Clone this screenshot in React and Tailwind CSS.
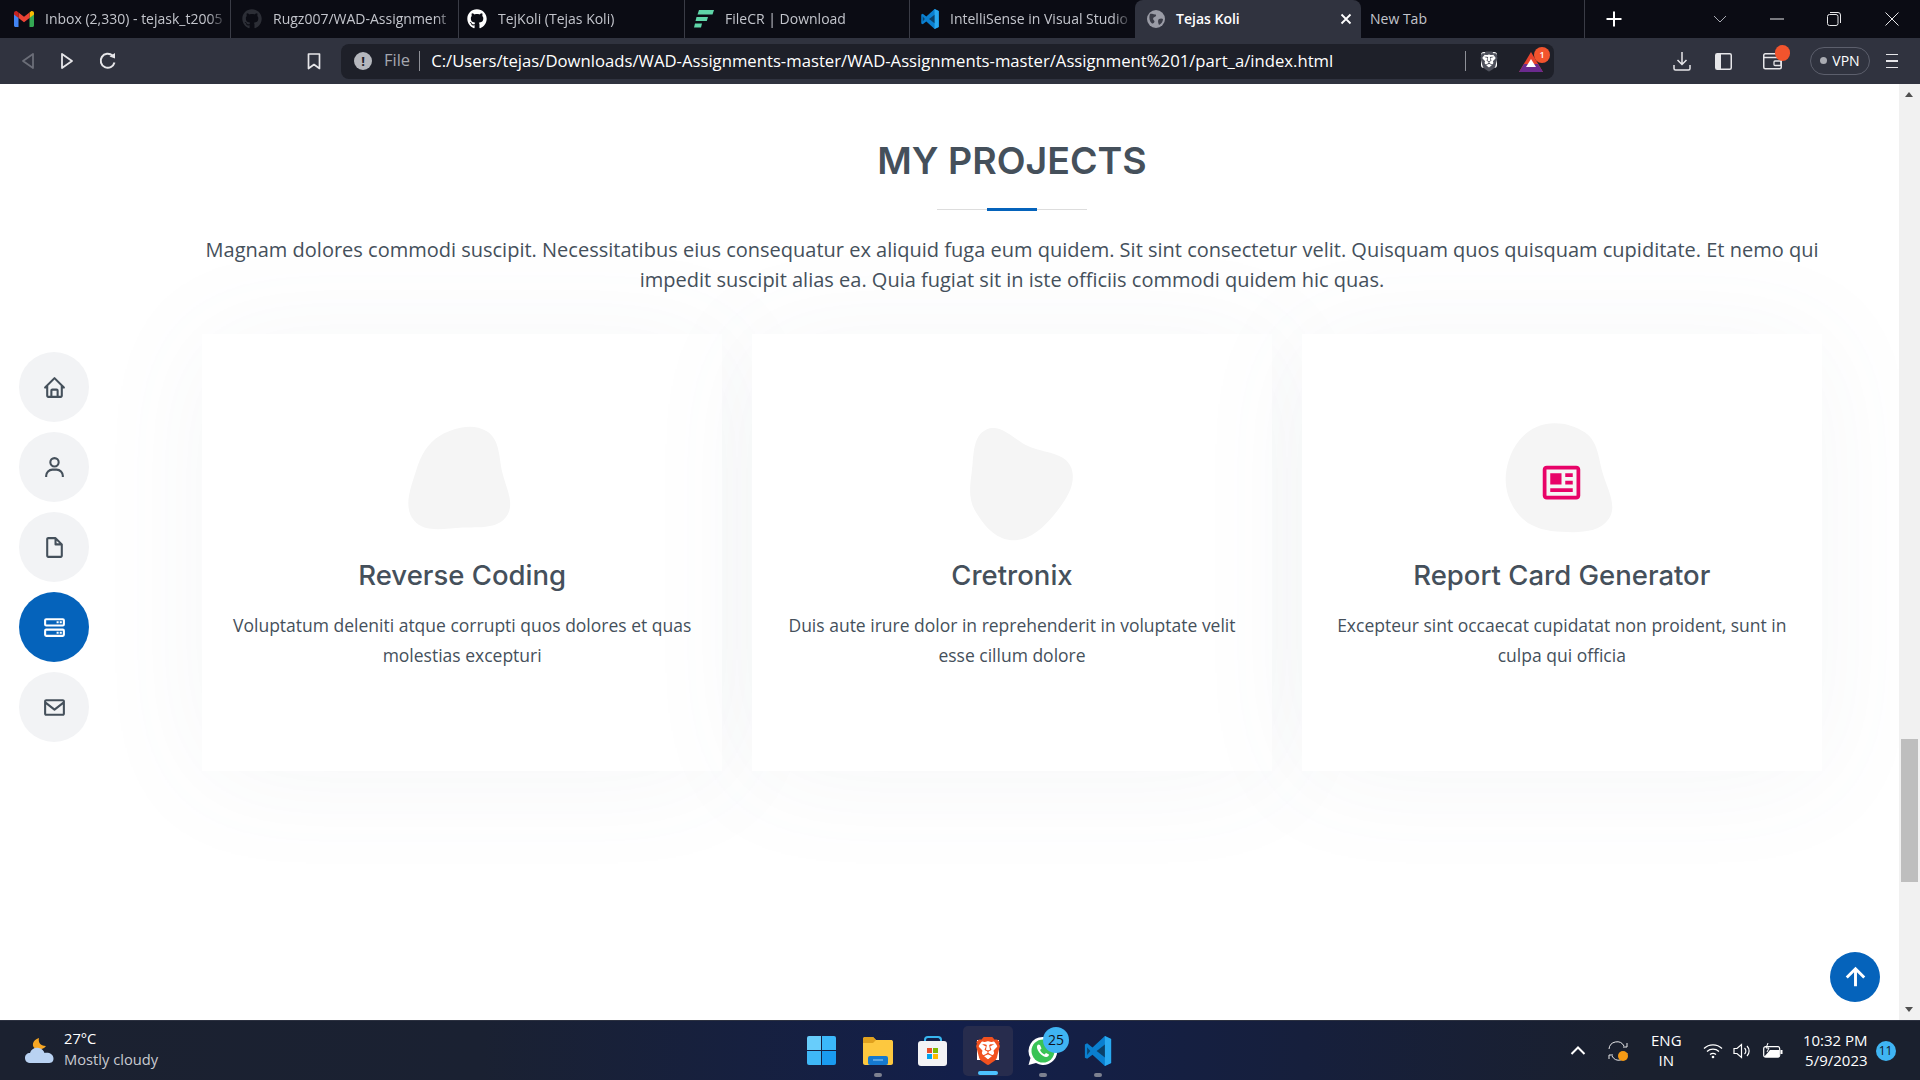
import React from "react";
import { BiHome, BiUser, BiFileBlank, BiServer, BiEnvelope, BiNews, BiUpArrowAlt } from "react-icons/bi";
import { FaGithub } from "react-icons/fa";
import { SiBrave } from "react-icons/si";

const Gmail = () => (
  <svg width="20" height="16" viewBox="0 0 20 16" className="shrink-0">
    <path d="M0 2v12.5C0 15.3.7 16 1.5 16H4.500V6z" fill="#4285f4" />
    <path d="M20 2v12.5c0 .8-.7 1.500-1.500 1.500H15.500V6z" fill="#34a853" />
    <path d="M15.500 1.500V7L20 3.500V2C20 .3 18 -.5 16.800.4z" fill="#fbbc04" />
    <path d="M4.500 7V1.500L10 5.800l5.500-4.300V7L10 11.300z" fill="#ea4335" />
    <path d="M0 2v1.500L4.500 7V1.500L3.200.4C2 -.5 0 .3 0 2z" fill="#c5221f" />
  </svg>
);
const FileCR = () => (
  <svg width="20" height="20" viewBox="0 0 20 20" className="shrink-0">
    <path d="M5 1h15l-1.500 4.500H3.500zM2.500 8H14l-1.200 4H1.500zM1 14.500h7l-1 4H0z" fill="#5fd6a8" />
  </svg>
);
const VSCode = ({ s = 20 }) => (
  <svg width={s} height={s} viewBox="0 0 24 24" className="shrink-0">
    <path d="M17.500 0 7.600 9.100 3.300 5.800l-1.800.9v10.600l1.800.9 4.300-3.300 9.900 9.100 5-2.400V2.400z" fill="#0a7fcf" />
    <path d="M17.500 0l5 2.400v19.200l-5 2.400z" fill="#29a9f0" />
    <path d="M17.500 6.800 10.900 12l6.600 5.200z" fill="#0b0c14" fillOpacity="0.55" />
    <path d="M3.300 8.900 5.800 12l-2.500 3.100z" fill="#0b0c14" fillOpacity="0.5" />
  </svg>
);
const Globe = () => (
  <svg width="18" height="18" viewBox="0 0 18 18" className="shrink-0">
    <circle cx="9" cy="9" r="9" fill="#9a9ca6" />
    <path d="M3 4c2-.5 3 .5 5 .5s1 2-.5 2.500-2 2-.5 3.500-1 3.500-2 3C3 12 1.500 8 3 4zM12 9c2-1 3-.5 4 0 0 3-2 5-4 6-1-2-1.500-5 0-6z" fill="#3b3d48" />
  </svg>
);

const Tab = ({ w, pl, icon, text, sep = true }) => (
  <div className={`flex h-[38px] shrink-0 items-center ${sep ? "border-r border-[#3a3c46]" : ""}`} style={{ width: w, paddingLeft: pl }}>
    <span className="flex w-[20px] shrink-0 justify-center">{icon}</span>
    <span className="mb-[2px] ml-[11px] flex-1 overflow-hidden whitespace-nowrap pr-[5px] text-[14px] text-[#c3c5cc] [mask-image:linear-gradient(to_right,black_88%,transparent_99%)]">{text}</span>
  </div>
);

const NavBtn = ({ active, children }) => (
  <div className={`flex h-[70px] w-[70px] items-center justify-center rounded-full ${active ? "bg-[#0563bb] text-white" : "bg-[#f2f3f5] text-[#45505b]"}`}>
    {children}
  </div>
);

const blobs = [
  "M300,521.0016835830174C376.1290562159157,517.8887921683347,466.0731472004068,529.7835943286574,510.70327084640275,468.03025145048787C554.3714126377745,407.6079735673963,508.03601936045806,328.9844924480964,491.2728898941984,256.3432110539036C474.5976632858925,184.082847569629,479.9380746630129,96.60480741107993,416.23090153303,58.64404602377083C348.86323505073057,18.502131276798302,261.93793281208167,40.57373210992963,193.5410806939664,78.93577620505333C130.42746243093433,114.334589627462,98.30271207620316,179.96522072025542,76.75703585869454,249.04625023123273C51.97151888228291,328.5150500222984,13.704378332031375,421.85034740162234,66.52175969318436,486.19268352777647C119.04800174914682,550.1803526380478,217.28368757567262,524.383925680826,300,521.0016835830174",
  "M300,582.0697525312426C382.5290701553225,586.8405444964366,449.9789794690241,525.3245884688669,502.5850820975895,461.55621195738473C556.606425686781,396.0723002908107,615.8543463187945,314.28637112970534,586.6730223649479,234.56875336149918C558.9533121215079,158.8439757836574,454.9685369536778,164.00468322053177,381.49747125262974,130.76875717737553C312.15926192815925,99.40240125094834,248.97055460311594,18.661163978235184,179.8680185752513,50.54337015887873C110.5421016452524,82.52863877960104,119.82277516462835,180.83849132639028,109.12597500060166,256.43424936330496C100.08760227029461,320.3096726198365,92.17705696193138,384.0621239912766,124.79988738764834,439.7174275375508C164.83382741302287,508.01625554203684,220.96474134820875,577.5009287672846,300,582.0697525312426",
  "M300,541.5067337569781C382.14930387511276,545.0595476570109,479.8736841581634,548.3450877840088,526.4010558755058,480.5488172755941C571.5218469581645,414.80211281144784,517.5187510058486,332.0715597781072,496.52539010469104,255.14436215662573C477.37192572678356,184.95920475031193,473.57363656557914,105.61284051026155,413.0603344069578,65.22779650032875C343.27470386102294,18.654635553484475,251.2091493199835,5.337323636656869,175.0934190732945,40.62881213300186C97.87086631185822,76.43348514350839,51.98124368387456,156.15599469081315,36.44837278890362,239.84606092416172C21.716077023791087,319.22268207091537,43.775223500013084,401.1760424656574,96.891909868211,461.97329694683043C147.22146801428983,519.5804099606455,223.5754009179313,538.201503339737,300,541.5067337569781",
];

const Card = ({ blob, title, text, icon }) => (
  <div className="flex h-[437px] flex-col items-center bg-white px-[25px] pt-[85px] text-center shadow-[0_6px_112px_rgba(110,123,131,0.06)]">
    <div className="relative h-[125px] w-[125px]">
      <svg width="125" height="125" viewBox="0 0 600 600"><path d={blob} fill="#f5f5f5" /></svg>
      {icon && <span className="absolute inset-0 flex items-center justify-center pt-[1px]">{icon}</span>}
    </div>
    <h4 className="mt-[13px] h-[36px] font-['Inter',sans-serif] text-[27.500px] font-medium leading-[36px] text-[#45505b]">{title}</h4>
    <p className="mt-[17px] font-['Open_Sans',sans-serif] text-[17.500px] leading-[30px] text-[#45505b]">{text}</p>
  </div>
);

export default function App() {
  return (
    <div className="flex h-[1080px] w-[1920px] flex-col overflow-hidden bg-white font-['Open_Sans',sans-serif]">
      {/* Tab strip */}
      <div className="flex h-[38px] shrink-0 items-center bg-[#0b0c14]">
        <Tab w={231} pl={14} icon={<Gmail />} text="Inbox (2,330) - tejask_t2005" />
        <Tab w={228} pl={11} icon={<FaGithub size={20} color="#2c2e36" />} text="Rugz007/WAD-Assignment" />
        <Tab w={226} pl={8} icon={<FaGithub size={20} color="#ffffff" />} text="TejKoli (Tejas Koli)" />
        <Tab w={225} pl={9} icon={<FileCR />} text="FileCR | Download" />
        <div className="flex h-[38px] w-[225px] shrink-0 items-center pl-[10px]">
          <VSCode />
          <span className="mb-[2px] ml-[10px] flex-1 overflow-hidden whitespace-nowrap text-[14px] text-[#c3c5cc] [mask-image:linear-gradient(to_right,black_88%,transparent_99%)]">IntelliSense in Visual Studio</span>
        </div>
        <div className="flex h-[38px] w-[226px] shrink-0 items-center rounded-t-[8px] bg-[#30333f] pl-[12px] pr-[9px]">
          <Globe />
          <span className="mb-[2px] ml-[11px] flex-1 text-[14px] font-semibold text-white">Tejas Koli</span>
          <svg width="12" height="12" viewBox="0 0 12 12"><path d="M1.500 1.500l9 9M10.500 1.500l-9 9" stroke="#fff" strokeWidth="1.800" /></svg>
        </div>
        <div className="flex h-[38px] w-[224px] shrink-0 items-center border-r border-[#3a3c46] pb-[2px] pl-[9px] text-[14px] text-[#c3c5cc]">New Tab</div>
        <svg className="ml-[21px]" width="16" height="16" viewBox="0 0 16 16"><path d="M8 .5v15M.5 8h15" stroke="#fff" strokeWidth="2" /></svg>
        <svg className="ml-[91px]" width="14" height="8" viewBox="0 0 14 8"><path d="M1 1l6 6 6-6" fill="none" stroke="#a8aab2" strokeWidth="1" /></svg>
        <svg className="ml-[43px]" width="14" height="14" viewBox="0 0 14 14"><path d="M0 7h14" stroke="#e8e8ea" strokeWidth="1" /></svg>
        <svg className="ml-[43px]" width="14" height="14" viewBox="0 0 14 14"><rect x=".5" y="2.500" width="10.500" height="11" rx="2" fill="none" stroke="#e8e8ea" /><path d="M3 .5h8a2.500 2.500 0 0 1 2.500 2.500v8" fill="none" stroke="#e8e8ea" /></svg>
        <svg className="ml-[44px]" width="14" height="14" viewBox="0 0 14 14"><path d="M.5.5l13 13M13.500.5l-13 13" stroke="#e8e8ea" strokeWidth="1" /></svg>
      </div>

      {/* Toolbar */}
      <div className="flex h-[46px] shrink-0 items-center bg-[#30333f]">
        <div className="flex w-[341px] shrink-0 items-center">
          <svg className="ml-[21px]" width="14" height="18" viewBox="0 0 14 18"><path d="M12 2 2 9l10 7z" fill="none" stroke="#6b6e78" strokeWidth="1.800" strokeLinejoin="round" /></svg>
          <svg className="ml-[25px]" width="14" height="18" viewBox="0 0 14 18"><path d="M2 2l10 7-10 7z" fill="none" stroke="#e6e6e9" strokeWidth="1.800" strokeLinejoin="round" /></svg>
          <svg className="ml-[25px]" width="18" height="18" viewBox="0 0 18 18"><path d="M15.500 10.500A7 7 0 1 1 13.500 3.600" fill="none" stroke="#e6e6e9" strokeWidth="2" /><path d="M10.500 4.500l5.500 2V1z" fill="#e6e6e9" /></svg>
          <svg className="ml-[190px]" width="14" height="17" viewBox="0 0 14 17"><path d="M1.500 1h11v14.500L7 11.500l-5.500 4z" fill="none" stroke="#e6e6e9" strokeWidth="1.700" strokeLinejoin="round" /></svg>
        </div>
        <div className="flex h-[35px] w-[1213px] shrink-0 items-center rounded-[8px] bg-[#1e2029]">
          <span className="ml-[13px] flex h-[18px] w-[18px] items-center justify-center rounded-full bg-[#b5b7bd] text-[13px] font-bold leading-none text-[#1e2029]">!</span>
          <span className="mb-[1px] ml-[12px] text-[16.500px] text-[#a5a7af]">File</span>
          <span className="ml-[9px] h-[20px] w-px bg-[#8e9097]" />
          <span className="mb-[1px] ml-[11px] w-[1034px] whitespace-nowrap text-[16.700px] text-white">C:/Users/tejas/Downloads/WAD-Assignments-master/WAD-Assignments-master/Assignment%201/part_a/index.html</span>
          <span className="h-[20px] w-px bg-[#8e9097]" />
          <span className="relative ml-[13px] flex h-[22px] w-[20px] items-center justify-center">
            <span className="absolute left-[2px] top-[2px] h-[16px] w-[16px] rounded-[3px] bg-white" />
            <SiBrave size={21} color="#4e505b" className="relative" />
          </span>
          <span className="relative ml-[20px] flex h-[22px] w-[24px]">
            <svg width="24" height="20" viewBox="0 0 24 20" className="mt-[2px]">
              <path d="M12 0l12 20H0z" fill="#e8432d" />
              <path d="M0 20l5-8 14 0 5 8z" fill="#6b2a8e" />
              <path d="M12 7l5 8H7z" fill="#fff" />
            </svg>
            <span className="absolute -right-[7px] -top-[3px] flex h-[16px] w-[16px] items-center justify-center rounded-full bg-[#f2542d] text-[9px] font-semibold text-white">1</span>
          </span>
        </div>
        <svg className="ml-[119px]" width="18" height="20" viewBox="0 0 18 20"><path d="M9 1v12M4.500 9 9 13.500 13.500 9M1 14v3.500C1 18.500 1.500 19 2.500 19h13c1 0 1.500-.5 1.500-1.500V14" fill="none" stroke="#e6e6e9" strokeWidth="1.500" /></svg>
        <svg className="ml-[24px]" width="17" height="17" viewBox="0 0 17 17"><rect x=".75" y=".75" width="15.500" height="15.500" rx="1.500" fill="none" stroke="#e6e6e9" strokeWidth="1.500" /><rect x="1" y="1" width="5" height="15" fill="#e6e6e9" /></svg>
        <span className="relative ml-[31px] flex h-[18px] w-[19px]">
          <svg width="19" height="18" viewBox="0 0 19 18"><rect x=".75" y="1.750" width="17.500" height="15" rx="1.500" fill="none" stroke="#e6e6e9" strokeWidth="1.500" /><path d="M1 5.500h17" stroke="#e6e6e9" strokeWidth="1.500" /><rect x="11" y="9" width="7" height="4.500" rx="1" fill="none" stroke="#e6e6e9" strokeWidth="1.300" /></svg>
          <span className="absolute -right-[8px] -top-[7px] h-[16px] w-[15px] rounded-full bg-[#f2542d]" />
        </span>
        <span className="ml-[28px] flex h-[28px] w-[60px] items-center justify-center rounded-full border border-[#5c5f6c] pb-[2px] text-[14px] text-white">
          <span className="mr-[5px] h-[7px] w-[7px] rounded-full bg-[#a9abb2]" />VPN
        </span>
        <span className="ml-[16px] flex w-[12px] flex-col gap-[5px]">
          <span className="h-[1.500px] bg-[#e6e6e9]" />
          <span className="h-[1.500px] bg-[#e6e6e9]" />
          <span className="h-[1.500px] bg-[#e6e6e9]" />
        </span>
      </div>

      {/* Page */}
      <div className="relative flex min-h-0 flex-1">
        <div className="min-w-0 flex-1 overflow-hidden pl-[202px] pr-[77px] pt-[52px]">
          <h2 className="text-center font-['Inter',sans-serif] text-[37.500px] font-semibold leading-[50px] text-[#45505b]">MY PROJECTS</h2>
          <div className="relative mx-auto mt-[23px] h-px w-[150px] bg-[#dddddd]">
            <span className="absolute -top-px left-[50px] h-[3px] w-[50px] bg-[#0563bb]" />
          </div>
          <p className="mt-[25px] text-center text-[20px] leading-[30px] text-[#45505b]">
            Magnam dolores commodi suscipit. Necessitatibus eius consequatur ex aliquid fuga eum quidem. Sit sint consectetur velit. Quisquam quos quisquam cupiditate. Et nemo qui impedit suscipit alias ea. Quia fugiat sit in iste officiis commodi quidem hic quas.
          </p>
          <div className="mt-[39px] grid grid-cols-3 gap-[29.500px]">
            <Card blob={blobs[0]} title="Reverse Coding" text="Voluptatum deleniti atque corrupti quos dolores et quas molestias excepturi" />
            <Card blob={blobs[1]} title="Cretronix" text="Duis aute irure dolor in reprehenderit in voluptate velit esse cillum dolore" />
            <Card blob={blobs[2]} title="Report Card Generator" text="Excepteur sint occaecat cupidatat non proident, sunt in culpa qui officia" icon={<BiNews size={45} color="#e80368" />} />
          </div>
        </div>

        {/* Scrollbar */}
        <div className="relative w-[21px] shrink-0 bg-[#f1f1f1]">
          <span className="absolute left-[6px] top-[8px] h-0 w-0 border-x-[4.500px] border-b-[5px] border-x-transparent border-b-[#505050]" />
          <span className="absolute left-[2px] top-[655px] h-[143px] w-[17px] bg-[#bebebe]" />
          <span className="absolute bottom-[8px] left-[6px] h-0 w-0 border-x-[4.500px] border-t-[5px] border-x-transparent border-t-[#505050]" />
        </div>

        {/* Floating side menu */}
        <div className="absolute left-[19px] top-[268px] flex flex-col gap-[10px]">
          <NavBtn><BiHome size={25} /></NavBtn>
          <NavBtn><BiUser size={25} /></NavBtn>
          <NavBtn><BiFileBlank size={25} /></NavBtn>
          <NavBtn active><BiServer size={25} /></NavBtn>
          <NavBtn><BiEnvelope size={25} /></NavBtn>
        </div>

        {/* Back to top */}
        <div className="absolute left-[1830px] top-[868px] flex h-[50px] w-[50px] items-center justify-center rounded-full bg-[#0563bb] text-white">
          <BiUpArrowAlt size={35} />
        </div>
      </div>

      {/* Taskbar */}
      <div className="flex h-[60px] shrink-0 items-center border-t border-[#2c3140] bg-[linear-gradient(90deg,#1b2130_0%,#1a2132_25%,#131f4a_50%,#161f3c_68%,#1a202e_85%,#1a202e_100%)]">
        <div className="flex w-[807px] shrink-0 items-center">
          <svg className="ml-[24px]" width="32" height="30" viewBox="0 0 32 30">
            <path d="M11 3c-1 4 1 8 7 8-2 3-6 4-10 3C3 12 4 5 11 3z" transform="translate(4 -1)" fill="#f6a623" />
            <path d="M7 27c-4 0-6-2-6-5s2-5 5-5c1-4 5-6 9-5 3 .5 5 3 5.500 5 4-1 9 1 9 5.500S26 27 23 27z" fill="#b9d2f2" />
          </svg>
          <div className="mb-[4px] ml-[8px] flex flex-col text-[14.700px] leading-[21px]">
            <span className="text-white">27°C</span>
            <span className="text-[#c8cad0]">Mostly cloudy</span>
          </div>
        </div>
        <div className="flex items-center">
          <span className="grid h-[29px] w-[29px] grid-cols-2 gap-[1.500px]">
            <span className="rounded-tl-[2px] bg-[#68cdfb]" />
            <span className="rounded-tr-[2px] bg-[#3bb8fa]" />
            <span className="rounded-bl-[2px] bg-[#3fb7f6]" />
            <span className="rounded-br-[2px] bg-[#1a9bf0]" />
          </span>
          <span className="relative ml-[27px] flex h-[50px] w-[30px] items-center">
            <svg width="30" height="28" viewBox="0 0 30 28"><path d="M0 2c0-1 .5-2 2-2h8l3 3h15c1 0 2 .5 2 2v21c0 1-1 2-2 2H2c-1 0-2-1-2-2z" fill="#fdc83f" /><path d="M0 2c0-1 .5-2 2-2h8l3 3-3 3H0z" fill="#e0a11e" /><rect x="5" y="19" width="20" height="9" rx="2" fill="#1579cf" /><path d="M10 23h10" stroke="#9fd2f7" strokeWidth="1" /></svg>
            <span className="absolute -bottom-[1px] left-[11px] h-[4px] w-[8px] rounded-full bg-[#7d8190]" />
          </span>
          <span className="ml-[25px] flex h-[30px] w-[29px] flex-col items-center rounded-b-[3px]">
            <span className="h-[5px] w-[18px] rounded-t-[4px] border-x-2 border-t-2 border-[#38b6f0]" />
            <span className="grid h-[25px] w-[29px] place-content-center rounded-[3px] bg-[#f3f3f5]">
              <span className="grid grid-cols-2 gap-px">
                <span className="h-[5px] w-[5px] bg-[#e8502a]" />
                <span className="h-[5px] w-[5px] bg-[#7fb900]" />
                <span className="h-[5px] w-[5px] bg-[#00a4ef]" />
                <span className="h-[5px] w-[5px] bg-[#ffb900]" />
              </span>
            </span>
          </span>
          <span className="relative ml-[16px] flex h-[50px] w-[50px] items-center justify-center rounded-[5px] bg-[#272c4d]">
            <span className="absolute left-[14px] top-[14px] h-[20px] w-[22px] bg-white" />
            <SiBrave size={28} color="#f1511f" className="relative" />
            <span className="absolute bottom-[1px] left-[15px] h-[4px] w-[20px] rounded-full bg-[#4cc2ff]" />
          </span>
          <span className="relative ml-[15px] flex h-[50px] w-[30px] items-center">
            <svg width="30" height="30" viewBox="0 0 30 30">
              <path d="M15 1a14 14 0 1 1-7 26l-7.500 2 2-7A14 14 0 0 1 15 1z" fill="#fff" />
              <circle cx="15" cy="15" r="11.500" fill="#39c355" />
              <path d="M10 8.500c-1.500 1.500-1.500 3 0 6s5 6 8 6.500c1.500.2 3-1 3-2.500l-3-1.500-1.500 1.500c-1.500-.5-4-3-4.500-4.500l1.500-1.500-1.500-3.500z" fill="#fff" />
            </svg>
            <span className="absolute -right-[11px] top-[1px] flex h-[26px] w-[26px] items-center justify-center rounded-full bg-[#3fb4f3] text-[14px] text-[#10131c]">25</span>
            <span className="absolute -bottom-[1px] left-[11px] h-[4px] w-[8px] rounded-full bg-[#7d8190]" />
          </span>
          <span className="relative ml-[25px] flex h-[50px] w-[30px] items-center">
            <VSCode s={30} />
            <span className="absolute -bottom-[1px] left-[11px] h-[4px] w-[8px] rounded-full bg-[#7d8190]" />
          </span>
        </div>
        <div className="ml-[457px] flex items-center text-white">
          <svg width="16" height="9" viewBox="0 0 16 9"><path d="M1.500 8 8 1.500 14.500 8" fill="none" stroke="#fff" strokeWidth="2" /></svg>
          <span className="relative ml-[22px] h-[20px] w-[20px]">
            <svg width="20" height="20" viewBox="0 0 20 20"><path d="M1 8a8 8 0 0 1 15-3M19 2v4h-4M19 12a8 8 0 0 1-15 3M1 18v-4h4" fill="none" stroke="#e8e8ea" strokeWidth="1" /></svg>
            <span className="absolute bottom-0 right-0 h-[10px] w-[10px] rounded-full bg-[#f59a14]" />
          </span>
          <span className="mb-[1px] ml-[23px] flex flex-col items-center text-[15px] leading-[20px]"><span>ENG</span><span>IN</span></span>
          <svg className="ml-[21px]" width="20" height="16" viewBox="0 0 20 16"><path d="M1 5.500a13 13 0 0 1 18 0M4 8.500a9 9 0 0 1 12 0M7 11.500a5 5 0 0 1 6 0" fill="none" stroke="#fff" strokeWidth="1.300" /><circle cx="10" cy="14" r="1.300" fill="#fff" /></svg>
          <svg className="ml-[10px]" width="19" height="16" viewBox="0 0 19 16"><path d="M1 5.500h3L8.500 1.500v13L4 10.500H1z" fill="none" stroke="#fff" strokeWidth="1.200" /><path d="M11.500 5a4 4 0 0 1 0 6M14 3a7 7 0 0 1 0 10" fill="none" stroke="#fff" strokeWidth="1.200" /></svg>
          <svg className="ml-[11px]" width="20" height="16" viewBox="0 0 20 16"><rect x=".7" y="3.700" width="16" height="10.500" rx="2" fill="none" stroke="#fff" strokeWidth="1.200" /><path d="M1 14h15V7H7z" fill="#fff" /><rect x="17.500" y="7" width="2" height="4" fill="#fff" /><path d="M5 0 3 5h3L4 9" fill="none" stroke="#fff" strokeWidth="1" /></svg>
          <div className="mb-[1px] ml-[11px] flex w-[74px] flex-col items-end text-[15px] leading-[20px]"><span>10:32 PM</span><span>5/9/2023</span></div>
          <span className="ml-[8px] flex h-[20px] w-[20px] items-center justify-center rounded-full bg-[#3fb4f3] text-[12px] text-[#10131c]">11</span>
        </div>
      </div>
    </div>
  );
}
